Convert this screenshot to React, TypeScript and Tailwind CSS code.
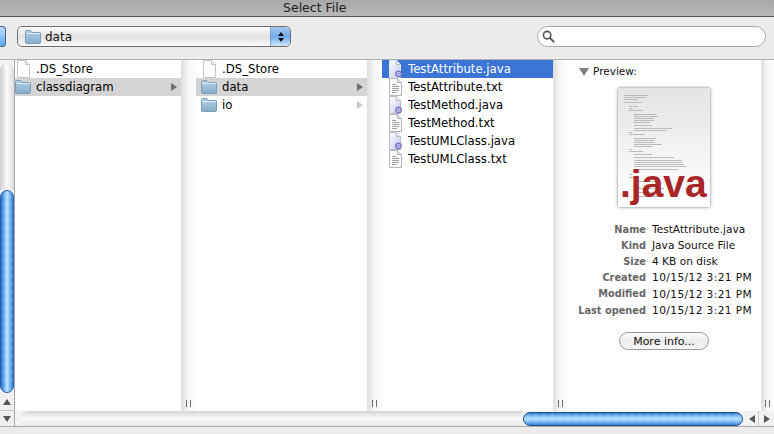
const uiFont = "font-['DejaVu_Sans',sans-serif]";

function DocIcon({ className = "" }: { className?: string }) {
  return (
    <svg viewBox="0 0 16 18" className={`h-[18px] w-4 shrink-0 ${className}`}>
      <path d="M2.5 .5H10.5L14.5 4.5V17.5H2.5Z" fill="#fff" stroke="#c4c4c4" />
      <path d="M10.5 .5V4.5H14.5" fill="#eee" stroke="#c4c4c4" />
    </svg>
  );
}

function TextDocIcon() {
  return (
    <svg viewBox="0 0 16 18" className="h-[18px] w-4 shrink-0">
      <path d="M2.5 .5H10.5L14.5 4.5V17.5H2.5Z" fill="#fbfbfb" stroke="#b4b4b4" />
      <path d="M10.5 .5V4.5H14.5" fill="#e6e6e6" stroke="#b4b4b4" />
      <path d="M5 6.5H9M5 8.5H12M5 10.5H12M5 12.5H12M5 14.5H10" stroke="#8b8b8b" strokeWidth=".8" />
    </svg>
  );
}

function JavaDocIcon({ selected = false }: { selected?: boolean }) {
  return (
    <svg viewBox="0 0 16 18" className="h-[18px] w-4 shrink-0">
      <defs>
        <linearGradient id="javaDoc" x1="0" y1="0" x2="1" y2="1">
          <stop offset="0" stopColor="#ffffff" />
          <stop offset="1" stopColor="#c4c6ee" />
        </linearGradient>
      </defs>
      <path d="M2.5 .5H9.5L13.5 4.5V17.5H2.5Z" fill="url(#javaDoc)" stroke={selected ? "#dfe6f7" : "#bcbcc8"} />
      <path d="M9.5 .5V4.5H13.5" fill="#eee" stroke="#bcbcc8" />
      <circle cx="11.5" cy="14" r="3.4" fill="#7a7ac8" />
      <circle cx="11.5" cy="14" r="1.5" fill="none" stroke="#e6e6ff" strokeWidth=".9" />
    </svg>
  );
}

function FolderIcon({ className = "" }: { className?: string }) {
  return (
    <svg viewBox="0 0 16 14" className={`h-[14px] w-4 shrink-0 ${className}`}>
      <defs>
        <linearGradient id="folderFill" x1="0" y1="0" x2="0" y2="1">
          <stop offset="0" stopColor="#b4d0e4" />
          <stop offset="1" stopColor="#86adcc" />
        </linearGradient>
      </defs>
      <path d="M.5 3V1.5Q.5 .5 1.5 .5H5.5L7 2.5H14.5Q15.5 2.5 15.5 3.5V12.5Q15.5 13.5 14.5 13.5H1.5Q.5 13.5 .5 12.5Z" fill="url(#folderFill)" stroke="#7c9db8" />
      <path d="M1 3.5H15" stroke="#dcebf5" />
    </svg>
  );
}

function Chevron({ active = true }: { active?: boolean }) {
  return (
    <span
      className={`h-0 w-0 border-y-[4px] border-l-[6px] border-y-transparent ${
        active ? "border-l-[#6e6e6e]" : "border-l-[#c8c8c8]"
      }`}
    />
  );
}

function ResizeGutter({ width }: { width: string }) {
  return (
    <div
      className={`flex shrink-0 items-end justify-center gap-px bg-gradient-to-r from-[#dedede] via-[#f7f7f7] to-[#fbfbfb] pb-[4px] ${width}`}
    >
      <span className="h-[7px] w-px bg-[#6b6b6b]" />
      <span className="w-px" />
      <span className="h-[7px] w-px bg-[#6b6b6b]" />
    </div>
  );
}

type Row = { name: string; kind: "doc" | "folder" | "java" | "txt"; selected?: "blue" | "gray"; arrow?: boolean; dim?: boolean };

function FileRow({ row, inset }: { row: Row; inset: string }) {
  const blue = row.selected === "blue";
  return (
    <div
      className={`flex h-[18px] items-center gap-[5px] pr-[4px] text-[11.7px] ${inset} ${
        blue ? "bg-[#3b74d6] text-white" : row.selected === "gray" ? "bg-[#d4d4d4] text-black" : "text-black"
      }`}
    >
      {row.kind === "doc" && <DocIcon />}
      {row.kind === "folder" && <FolderIcon />}
      {row.kind === "java" && <JavaDocIcon selected={blue} />}
      {row.kind === "txt" && <TextDocIcon />}
      <span className="flex-1 truncate pt-px">{row.name}</span>
      {row.arrow && <Chevron active={!row.dim} />}
    </div>
  );
}

const column1: Row[] = [
  { name: ".DS_Store", kind: "doc" },
  { name: "classdiagram", kind: "folder", selected: "gray", arrow: true },
];
const column2: Row[] = [
  { name: ".DS_Store", kind: "doc" },
  { name: "data", kind: "folder", selected: "gray", arrow: true },
  { name: "io", kind: "folder", arrow: true, dim: true },
];
const column3: Row[] = [
  { name: "TestAttribute.java", kind: "java", selected: "blue" },
  { name: "TestAttribute.txt", kind: "txt" },
  { name: "TestMethod.java", kind: "java" },
  { name: "TestMethod.txt", kind: "txt" },
  { name: "TestUMLClass.java", kind: "java" },
  { name: "TestUMLClass.txt", kind: "txt" },
];

const details = [
  ["Name", "TestAttribute.java"],
  ["Kind", "Java Source File"],
  ["Size", "4 KB on disk"],
  ["Created", "10/15/12 3:21 PM"],
  ["Modified", "10/15/12 3:21 PM"],
  ["Last opened", "10/15/12 3:21 PM"],
];

// x, y, width of the tiny code lines in the thumbnail
const codeLines = [
  [6, 7, 24], [6, 9, 22], [6, 11, 14], [6, 14, 18], [11, 18, 4], [16, 18, 4], [11, 20, 3], [11, 22, 14],
  [16, 26, 22], [16, 28, 24], [16, 30, 20], [16, 32, 20], [16, 34, 16], [16, 37, 18], [16, 40, 38], [16, 42, 32],
  [11, 44, 3], [11, 46, 16], [16, 50, 22], [16, 52, 20], [16, 54, 20], [16, 56, 28], [16, 58, 18], [11, 61, 3],
  [11, 63, 14], [16, 66, 18], [16, 69, 40], [16, 72, 48], [16, 74, 48], [16, 76, 50], [16, 78, 52], [16, 81, 44],
  [11, 86, 3], [11, 89, 8], [16, 93, 24], [16, 100, 30], [16, 104, 28], [16, 108, 24],
];

function Preview() {
  return (
    <div className="relative h-[119px] w-[92px] overflow-hidden bg-gradient-to-b from-[#e4e4e4] via-[#f2f2f2] to-white shadow-[0_0_3px_rgba(0,0,0,0.55)]">
      <svg viewBox="0 0 92 119" className="h-[119px] w-[92px]">
        {codeLines.map(([x, y, w], i) => (
          <rect key={i} x={x} y={y} width={w} height=".8" fill="#b0b0b0" />
        ))}
      </svg>
      <span className="absolute bottom-0 left-[2px] font-['Liberation_Sans',sans-serif] text-[39px] leading-[46px] font-bold text-[#a92526]">
        .java
      </span>
    </div>
  );
}

export default function App() {
  return (
    <div className={`flex h-[434px] w-[774px] flex-col overflow-hidden bg-[#ececec] ${uiFont}`}>
      <div className="h-[17px] shrink-0 border-b border-b-[#555] bg-gradient-to-b from-[#a8a8a8] to-[#b8b8b8] pl-[283px] text-[12.5px] leading-[15px] text-[#222]">
        Select File
      </div>

      <div className="flex h-[43px] shrink-0 items-center border-b border-b-[#b0b0b0] bg-[#ececec] pb-[3px]">
        <div className="h-[21px] w-[6px] rounded-r-[4px] border border-l-0 border-[#44618c] bg-gradient-to-b from-[#bfe0fa] to-[#5aa6ee]" />
        <div className="ml-[11px] flex h-[21px] w-[274px] items-stretch overflow-hidden rounded-[5px] border border-[#6f6f6f] bg-gradient-to-b from-[#fdfdfd] via-[#e2e2e2] to-[#fafafa]">
          <div className="flex flex-1 items-center gap-[4px] pl-[7px] text-[12px] text-[#111]">
            <FolderIcon />
            data
          </div>
          <div className="flex w-[20px] flex-col items-center justify-center gap-[2px] border-l border-l-[#7d9cc8] bg-gradient-to-b from-[#a8c8f0] via-[#6fa8ea] to-[#cfeafc]">
            <span className="h-0 w-0 border-x-[3px] border-b-[4px] border-x-transparent border-b-[#111]" />
            <span className="h-0 w-0 border-x-[3px] border-t-[4px] border-x-transparent border-t-[#111]" />
          </div>
        </div>
        <div className="ml-[246px] flex h-[21px] w-[229px] items-center rounded-full border border-[#a8a8a8] bg-white pl-[4px]">
          <svg viewBox="0 0 14 14" className="h-[13px] w-[13px]">
            <circle cx="5.5" cy="5.5" r="4" fill="none" stroke="#555" strokeWidth="1.8" />
            <path d="M8.5 8.5L12.5 12.5" stroke="#555" strokeWidth="2.2" strokeLinecap="round" />
          </svg>
        </div>
      </div>

      <div className="flex h-[366px] shrink-0">
        <div className="flex w-[15px] shrink-0 flex-col border-r border-r-[#a8a8a8] bg-[#f2f2f2]">
          <div className="mt-[3px] h-[127px] rounded-t-[7px] bg-gradient-to-r from-[#cfcfcf] via-[#fbfbfb] to-[#dcdcdc]" />
          <div className="h-[203px] rounded-[7px] border border-[#2a5fa8] bg-[repeating-linear-gradient(0deg,rgba(255,255,255,0)_0,rgba(255,255,255,0.12)_4px,rgba(255,255,255,0)_8px),linear-gradient(90deg,#1f62c0,#5aa7f0_25%,#bfe4fc_50%,#6db4f4_75%,#2d78d8)]" />
          <div className="flex h-[18px] items-center justify-center border-b border-b-[#c8c8c8] bg-[#f0f0f0]">
            <span className="h-0 w-0 border-x-[4px] border-b-[6px] border-x-transparent border-b-[#555]" />
          </div>
          <div className="flex flex-1 items-center justify-center bg-[#f0f0f0]">
            <span className="h-0 w-0 border-x-[4px] border-t-[6px] border-x-transparent border-t-[#555]" />
          </div>
        </div>

        <div className="flex w-[759px] flex-col">
          <div className="flex h-[351px] bg-white">
            <div className="w-[166px] shrink-0">
              {column1.map((row) => (
                <FileRow key={row.name} row={row} inset="pl-0" />
              ))}
            </div>
            <ResizeGutter width="w-[15px]" />
            <div className="w-[171px] shrink-0">
              {column2.map((row) => (
                <FileRow key={row.name} row={row} inset="pl-[5px]" />
              ))}
            </div>
            <ResizeGutter width="w-[15px]" />
            <div className="w-[171px] shrink-0">
              {column3.map((row) => (
                <FileRow key={row.name} row={row} inset="pl-[5px]" />
              ))}
            </div>
            <ResizeGutter width="w-[14px]" />
            <div className="flex w-[194px] shrink-0 flex-col">
              <div className="mt-[5px] flex h-[13px] items-center gap-[4px] pl-[12px] text-[10.5px]">
                <span className="h-0 w-0 border-x-[5px] border-t-[8px] border-x-transparent border-t-[#808080]" />
                <span className="pt-[1px] text-[#111]">Preview:</span>
              </div>
              <div className="mt-[10px] ml-[51px]">
                <Preview />
              </div>
              <div className="mt-[14px] flex flex-col">
                {details.map(([label, value]) => (
                  <div key={label} className="flex h-[16.2px] items-center leading-none">
                    <span className="w-[79px] pt-px text-right text-[9.8px] font-bold text-[#666]">{label}</span>
                    <span
                      className={`ml-[6px] whitespace-nowrap text-[10.6px] text-[#111] ${
                        value.startsWith("10/") ? "tracking-[0.4px]" : ""
                      }`}
                    >
                      {value}
                    </span>
                  </div>
                ))}
              </div>
              <button className="mt-[14px] ml-[52px] h-[18px] w-[90px] rounded-full border border-[#9a9a9a] bg-gradient-to-b from-white via-[#ececec] to-[#f8f8f8] text-[11px] leading-none text-[#111]">
                More info...
              </button>
            </div>
            <ResizeGutter width="w-[13px]" />
          </div>

          <div className="flex h-[15px] items-center bg-[#f2f2f2]">
            <div className="ml-[6px] h-full w-[502px] rounded-l-full bg-gradient-to-b from-[#d4d4d4] via-[#fbfbfb] to-[#e6e6e6]" />
            <div className="h-[14px] w-[220px] rounded-full border border-[#24508e] bg-[repeating-linear-gradient(90deg,rgba(255,255,255,0)_0,rgba(255,255,255,0.1)_4px,rgba(255,255,255,0)_8px),linear-gradient(180deg,#2c74d0,#7cbcf4_25%,#b8e0fc_50%,#70b4f0_75%,#2f7cd8)]" />
            <div className="ml-[2px] flex h-full w-[14px] items-center justify-center border-r border-r-[#c8c8c8]">
              <span className="h-0 w-0 border-y-[4px] border-r-[6px] border-y-transparent border-r-[#555]" />
            </div>
            <div className="flex h-full w-[15px] items-center justify-center">
              <span className="h-0 w-0 border-y-[4px] border-l-[6px] border-y-transparent border-l-[#555]" />
            </div>
          </div>
        </div>
      </div>

      <div className="flex-1 border-t border-t-[#a8a8a8] bg-[#ececec]" />
    </div>
  );
}
